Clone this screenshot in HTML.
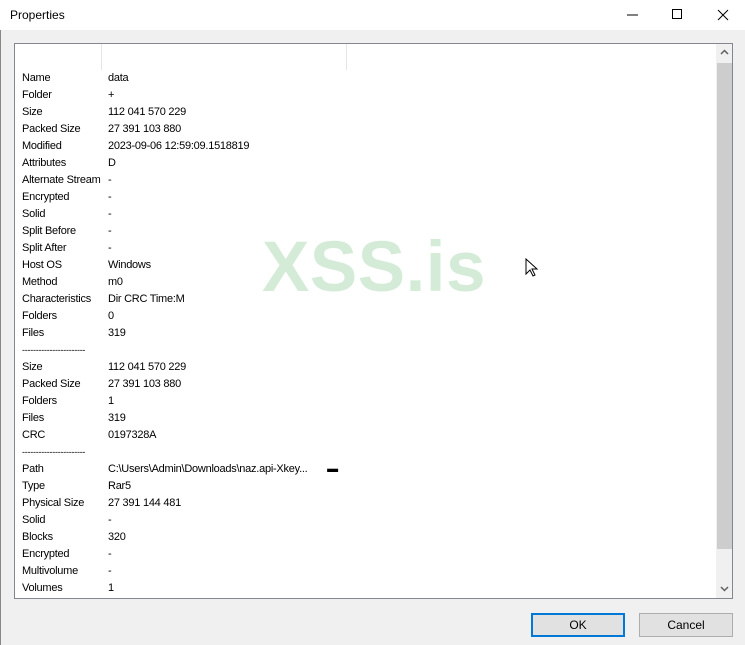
<!DOCTYPE html>
<html><head><style>
body{margin:0;width:745px;height:645px;background:#f0f0f0;position:relative;overflow:hidden;font-family:"Liberation Sans",Tahoma,sans-serif;font-size:11px;color:#000}
.title{position:absolute;left:0;top:0;width:745px;height:30px;background:#fff}
.title span{position:absolute;left:10px;top:8px;font-size:12px}
.lb{position:absolute;left:14px;top:43px;width:717px;height:554px;border:1px solid #828790;background:#fff}
.row{position:absolute;left:7px;height:17px;line-height:17px;white-space:nowrap;letter-spacing:-0.25px}
.row b{font-weight:normal;position:absolute;left:86px}
.sb{position:absolute;left:701px;top:0;width:16px;height:554px;background:#f0f0f0}
.th{position:absolute;left:1px;top:19px;width:15px;height:486px;background:#cdcdcd}
.btn{position:absolute;top:613px;height:22px;width:92px;background:#e1e1e1;border:1px solid #adadad;text-align:center;line-height:22px;font-size:12px}
.wm{position:absolute;left:262px;top:227px;font-size:71px;font-weight:bold;color:#d4ebd7;letter-spacing:0.5px}
</style></head><body>
<div style="position:absolute;left:0;top:0;width:1px;height:645px;background:#888"></div>
<div class="title"><span>Properties</span>
<svg style="position:absolute;left:620px;top:8px" width="120" height="14" viewBox="0 0 120 14"><path d="M7 7H18" stroke="#000"/><path d="M52.5 1.5h9v9h-9z" stroke="#000" fill="none"/><path d="M98 2l10 10M108 2l-10 10" stroke="#000"/></svg></div>
<div class="lb">
<div style="position:absolute;left:86px;top:0;width:1px;height:26px;background:#e5e5e5"></div>
<div style="position:absolute;left:331px;top:0;width:1px;height:26px;background:#e5e5e5"></div>
<div class="row" style="top:26px">Name<b>data</b></div>
<div class="row" style="top:43px">Folder<b>+</b></div>
<div class="row" style="top:60px">Size<b>112 041 570 229</b></div>
<div class="row" style="top:77px">Packed Size<b>27 391 103 880</b></div>
<div class="row" style="top:94px">Modified<b>2023-09-06 12:59:09.1518819</b></div>
<div class="row" style="top:111px">Attributes<b>D</b></div>
<div class="row" style="top:128px">Alternate Stream<b>-</b></div>
<div class="row" style="top:145px">Encrypted<b>-</b></div>
<div class="row" style="top:162px">Solid<b>-</b></div>
<div class="row" style="top:179px">Split Before<b>-</b></div>
<div class="row" style="top:196px">Split After<b>-</b></div>
<div class="row" style="top:213px">Host OS<b>Windows</b></div>
<div class="row" style="top:230px">Method<b>m0</b></div>
<div class="row" style="top:247px">Characteristics<b>Dir CRC Time:M</b></div>
<div class="row" style="top:264px">Folders<b>0</b></div>
<div class="row" style="top:281px">Files<b>319</b></div>
<div class="row" style="top:298px;font-size:9px">-----------------------</div>
<div class="row" style="top:315px">Size<b>112 041 570 229</b></div>
<div class="row" style="top:332px">Packed Size<b>27 391 103 880</b></div>
<div class="row" style="top:349px">Folders<b>1</b></div>
<div class="row" style="top:366px">Files<b>319</b></div>
<div class="row" style="top:383px">CRC<b>0197328A</b></div>
<div class="row" style="top:400px;font-size:9px">-----------------------</div>
<div class="row" style="top:417px">Path<b>C:\Users\Admin\Downloads\naz.api-Xkey...&nbsp;&nbsp;&nbsp;&nbsp;&nbsp;&nbsp;&nbsp;▬</b></div>
<div class="row" style="top:434px">Type<b>Rar5</b></div>
<div class="row" style="top:451px">Physical Size<b>27 391 144 481</b></div>
<div class="row" style="top:468px">Solid<b>-</b></div>
<div class="row" style="top:485px">Blocks<b>320</b></div>
<div class="row" style="top:502px">Encrypted<b>-</b></div>
<div class="row" style="top:519px">Multivolume<b>-</b></div>
<div class="row" style="top:536px">Volumes<b>1</b></div>
<div class="sb"><div class="th"></div>
<svg style="position:absolute;left:4px;top:5px" width="9" height="6"><path d="M1 5l3.5-3.5L8 5" stroke="#606060" stroke-width="1.5" fill="none"/></svg>
<svg style="position:absolute;left:4px;top:542px" width="9" height="6"><path d="M1 1l3.5 3.5L8 1" stroke="#606060" stroke-width="1.5" fill="none"/></svg>
</div>
</div>
<div class="wm">XSS.is</div>
<svg style="position:absolute;left:525px;top:258px" width="14" height="20"><path d="M1 1v15l4-4 3 6 2-1-3-6h5z" fill="#fff" stroke="#000"/></svg>
<div class="btn" style="left:531px;border:2px solid #0078d7;width:90px;height:20px;line-height:20px">OK</div>
<div class="btn" style="left:639px">Cancel</div>
</body></html>
